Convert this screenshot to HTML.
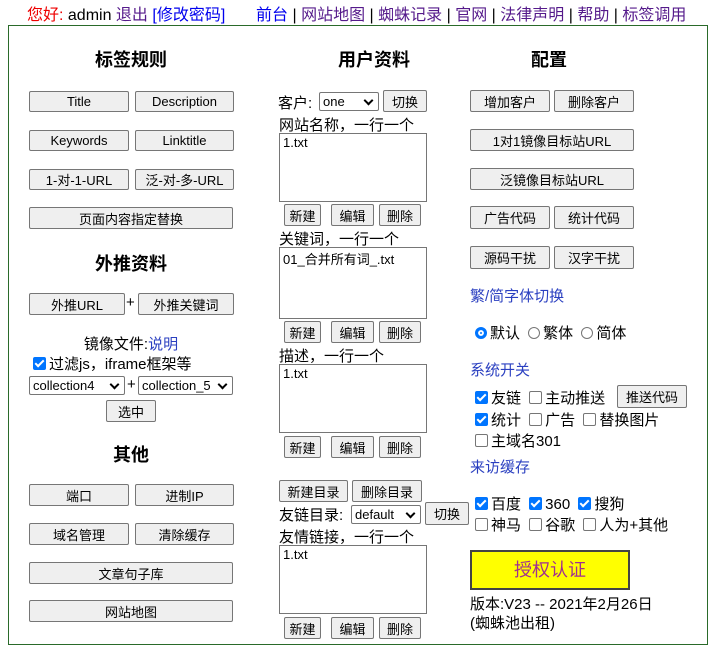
<!DOCTYPE html>
<html><head><meta charset="utf-8"><style>
body{margin:0;width:718px;height:650px;background:#fff;font-family:"Liberation Sans","Noto Sans CJK SC",sans-serif;font-size:15px;color:#000;position:relative;overflow:hidden}
.a{position:absolute;white-space:nowrap}
.b{position:absolute;background:#efefef;border:1px solid #767676;border-radius:2px;font-size:13px;text-align:center;box-sizing:border-box;display:flex;align-items:center;justify-content:center}
.h{position:absolute;font-weight:bold;font-size:18px;transform:translateX(-50%);white-space:nowrap}
.t{position:absolute;border:1px solid #767676;box-sizing:border-box;font-size:13px;padding:1px 3px;background:#fff}
.s{position:absolute;border:1px solid #767676;border-radius:2px;box-sizing:border-box;font-size:13px;padding:0 3px;background:#fff;display:flex;align-items:center}
.s:after{content:"";position:absolute;right:6px;top:4px;width:5px;height:5px;border-right:2px solid #000;border-bottom:2px solid #000;transform:rotate(45deg)}
.c{display:inline-block;width:13px;height:13px;box-sizing:border-box;border:1px solid #767676;border-radius:2px;vertical-align:-1px;margin:0 3px 0 4px;background:#fff}
.c.k{background:#0075ff;border-color:#0075ff;position:relative}
.c.k:after{content:"";position:absolute;left:3px;top:0px;width:3px;height:7px;border-right:2px solid #fff;border-bottom:2px solid #fff;transform:rotate(45deg)}
.r{display:inline-block;width:12px;height:12px;box-sizing:border-box;border:1px solid #767676;border-radius:50%;vertical-align:-1px;margin:0 3px 0 4px}
.r.k{border:3px solid #0075ff;box-shadow:inset 0 0 0 2px #fff;background:#0075ff}
.bl{color:#2a3fc0}
</style></head><body>
<div class="a" style="left:27px;top:1px;font-size:16px"><span style="color:#e00">您好:</span> admin <span style="color:#551a8b">退出</span> <span style="color:#0000ee">[修改密码]</span></div>
<div class="a" style="left:256px;top:1px;font-size:16px;color:#551a8b"><span style="color:#0000ee">前台</span> <span style="color:#000">|</span> 网站地图 <span style="color:#000">|</span> 蜘蛛记录 <span style="color:#000">|</span> 官网 <span style="color:#000">|</span> 法律声明 <span style="color:#000">|</span> 帮助 <span style="color:#000">|</span> 标签调用</div>
<div class="a" style="left:8px;top:25px;width:700px;height:620px;border:1px solid #2a6a2a;box-sizing:border-box"></div>

<div class="h" style="left:131px;top:46px">标签规则</div>
<div class="h" style="left:374px;top:46px">用户资料</div>
<div class="h" style="left:549px;top:46px">配置</div>

<div class="b" style="left:29px;top:91px;width:100px;height:21px">Title</div>
<div class="b" style="left:135px;top:91px;width:99px;height:21px">Description</div>
<div class="b" style="left:29px;top:130px;width:100px;height:21px">Keywords</div>
<div class="b" style="left:135px;top:130px;width:99px;height:21px">Linktitle</div>
<div class="b" style="left:29px;top:169px;width:100px;height:21px">1-对-1-URL</div>
<div class="b" style="left:135px;top:169px;width:99px;height:21px">泛-对-多-URL</div>
<div class="b" style="left:29px;top:207px;width:204px;height:22px">页面内容指定替换</div>
<div class="h" style="left:131px;top:250px">外推资料</div>
<div class="b" style="left:29px;top:293px;width:96px;height:22px">外推URL</div>
<div class="a" style="left:126px;top:294px">+</div>
<div class="b" style="left:138px;top:293px;width:96px;height:22px">外推关键词</div>
<div class="a" style="left:131px;top:333px;transform:translateX(-50%)">镜像文件:<span class="bl">说明</span></div>
<div class="a" style="left:29px;top:353px"><span class="c k"></span>过滤js，iframe框架等</div>
<div class="s" style="left:29px;top:376px;width:96px;height:19px">collection4</div>
<div class="a" style="left:127px;top:376px">+</div>
<div class="s" style="left:138px;top:376px;width:95px;height:19px">collection_5</div>
<div class="b" style="left:106px;top:400px;width:50px;height:22px">选中</div>
<div class="h" style="left:131px;top:441px">其他</div>
<div class="b" style="left:29px;top:484px;width:100px;height:22px">端口</div>
<div class="b" style="left:135px;top:484px;width:99px;height:22px">进制IP</div>
<div class="b" style="left:29px;top:523px;width:100px;height:22px">域名管理</div>
<div class="b" style="left:135px;top:523px;width:99px;height:22px">清除缓存</div>
<div class="b" style="left:29px;top:562px;width:204px;height:22px">文章句子库</div>
<div class="b" style="left:29px;top:600px;width:204px;height:22px">网站地图</div>

<div class="a" style="left:278px;top:92px">客户:</div>
<div class="s" style="left:319px;top:92px;width:60px;height:19px">one</div>
<div class="b" style="left:383px;top:90px;width:44px;height:22px">切换</div>
<div class="a" style="left:279px;top:114px">网站名称，一行一个</div>
<div class="t" style="left:279px;top:133px;width:148px;height:69px">1.txt</div>
<div class="b" style="left:284px;top:204px;width:37px;height:22px">新建</div>
<div class="b" style="left:331px;top:204px;width:43px;height:22px">编辑</div>
<div class="b" style="left:379px;top:204px;width:42px;height:22px">删除</div>
<div class="a" style="left:279px;top:228px">关键词，一行一个</div>
<div class="t" style="left:279px;top:247px;width:148px;height:72px">01_合并所有词_.txt</div>
<div class="b" style="left:284px;top:321px;width:37px;height:22px">新建</div>
<div class="b" style="left:331px;top:321px;width:43px;height:22px">编辑</div>
<div class="b" style="left:379px;top:321px;width:42px;height:22px">删除</div>
<div class="a" style="left:279px;top:345px">描述，一行一个</div>
<div class="t" style="left:279px;top:364px;width:148px;height:69px">1.txt</div>
<div class="b" style="left:284px;top:436px;width:37px;height:22px">新建</div>
<div class="b" style="left:331px;top:436px;width:43px;height:22px">编辑</div>
<div class="b" style="left:379px;top:436px;width:42px;height:22px">删除</div>
<div class="b" style="left:279px;top:480px;width:69px;height:22px">新建目录</div>
<div class="b" style="left:352px;top:480px;width:70px;height:22px">删除目录</div>
<div class="a" style="left:279px;top:504px">友链目录:</div>
<div class="s" style="left:351px;top:505px;width:70px;height:19px">default</div>
<div class="b" style="left:425px;top:502px;width:44px;height:23px">切换</div>
<div class="a" style="left:279px;top:526px">友情链接，一行一个</div>
<div class="t" style="left:279px;top:545px;width:148px;height:69px">1.txt</div>
<div class="b" style="left:284px;top:617px;width:37px;height:22px">新建</div>
<div class="b" style="left:331px;top:617px;width:43px;height:22px">编辑</div>
<div class="b" style="left:379px;top:617px;width:42px;height:22px">删除</div>

<div class="b" style="left:470px;top:90px;width:80px;height:22px">增加客户</div>
<div class="b" style="left:554px;top:90px;width:80px;height:22px">删除客户</div>
<div class="b" style="left:470px;top:129px;width:164px;height:22px">1对1镜像目标站URL</div>
<div class="b" style="left:470px;top:168px;width:164px;height:22px">泛镜像目标站URL</div>
<div class="b" style="left:470px;top:206px;width:80px;height:23px">广告代码</div>
<div class="b" style="left:554px;top:206px;width:80px;height:23px">统计代码</div>
<div class="b" style="left:470px;top:246px;width:80px;height:23px">源码干扰</div>
<div class="b" style="left:554px;top:246px;width:80px;height:23px">汉字干扰</div>
<div class="a bl" style="left:470px;top:285px">繁/简字体切换</div>
<div class="a" style="left:471px;top:322px"><span class="r k"></span>默认 <span class="r"></span>繁体 <span class="r"></span>简体</div>
<div class="a bl" style="left:470px;top:359px">系统开关</div>
<div class="a" style="left:471px;top:387px"><span class="c k"></span>友链 <span class="c"></span>主动推送</div>
<div class="b" style="left:617px;top:385px;width:70px;height:23px">推送代码</div>
<div class="a" style="left:471px;top:409px"><span class="c k"></span>统计 <span class="c"></span>广告 <span class="c"></span>替换图片</div>
<div class="a" style="left:471px;top:430px"><span class="c"></span>主域名301</div>
<div class="a bl" style="left:470px;top:456px">来访缓存</div>
<div class="a" style="left:471px;top:493px"><span class="c k"></span>百度 <span class="c k"></span>360 <span class="c k"></span>搜狗</div>
<div class="a" style="left:471px;top:514px"><span class="c"></span>神马 <span class="c"></span>谷歌 <span class="c"></span>人为+其他</div>
<div class="a" style="left:470px;top:550px;width:160px;height:40px;background:#ff0;border:2px solid #444;box-sizing:border-box;color:#a03090;font-size:18px;text-align:center;line-height:36px">授权认证</div>
<div class="a" style="left:470px;top:593px">版本:V23 -- 2021年2月26日</div>
<div class="a" style="left:470px;top:612px">(蜘蛛池出租)</div>
</body></html>
